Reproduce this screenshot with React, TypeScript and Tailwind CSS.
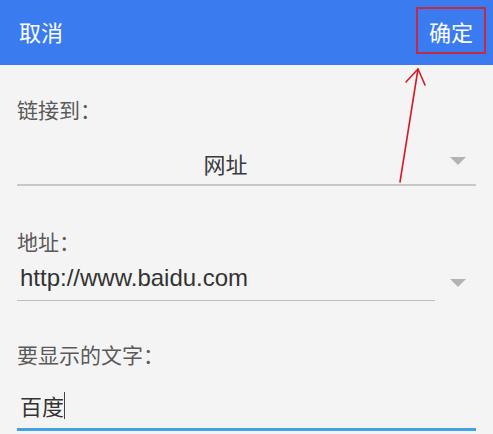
import React from "react";

const cjk = { fontFamily: '"Noto Sans CJK SC", "Noto Sans", sans-serif' };

function Triangle() {
  return (
    <svg width="16" height="8" viewBox="0 0 16 8" className="block">
      <path d="M0 0 L16 0 L8 8 Z" fill="#b3b3b3" />
    </svg>
  );
}

export default function App() {
  return (
    <div className="relative w-[493px] h-[434px] overflow-hidden bg-[#f4f4f4]" style={cjk}>
      <header className="h-[65px] bg-[#3a7cf0] flex items-center justify-between pl-[19px] pr-[20px] pb-[4px] text-white text-[22px] leading-[22px]">
        <span>取消</span>
        <span>确定</span>
      </header>

      <main className="px-[17px]">
        <div className="mt-[34px] h-[21px] text-[21px] leading-[21px] text-[#5a5a5a]">链接到：</div>
        <div className="mt-[20px] h-[46px] flex items-center border-b-2 border-[#c8c8c8]">
          <div className="flex-1 text-center text-[22px] leading-[22px] text-[#3a3a3a] pt-[2px]">网址</div>
          <div className="w-[42px] flex justify-center pl-[5px] pb-[3px]">
            <Triangle />
          </div>
        </div>

        <div className="mt-[45px] h-[21px] text-[21px] leading-[21px] text-[#5a5a5a]">地址：</div>
        <div className="mt-[12px] flex items-start">
          <div className="flex-1 border-b-[1.5px] border-[#bdbdbd] pb-[8px] pl-[3px]">
            <div
              className="h-[28px] text-[24px] leading-[28px] text-[#333333]"
              style={{ fontFamily: '"Liberation Sans", Arial, sans-serif' }}
            >
              http://www.baidu.com
            </div>
          </div>
          <div className="w-[41px] flex justify-center pl-[4px] pt-[15px]">
            <Triangle />
          </div>
        </div>

        <div className="mt-[43px] h-[21px] text-[21px] leading-[21px] text-[#5a5a5a]">要显示的文字：</div>
        <div className="mt-[26px] border-b-[3px] border-[#42a2e2] pb-[9px] pl-[3px]">
          <div className="h-[28px] flex items-center text-[22px] leading-[22px] text-[#333333]">
            <span>百度</span>
            <span className="w-px h-[27px] bg-[#444444]" />
          </div>
        </div>
      </main>

      <div className="absolute left-[416px] top-[7px] w-[70px] h-[47px] border-2 border-[#c42a46] pointer-events-none" />
      <svg
        className="absolute left-0 top-0 pointer-events-none"
        width="493"
        height="434"
        viewBox="0 0 493 434"
      >
        <g stroke="#d51a26" strokeWidth="1.6" fill="none" strokeLinecap="round" strokeLinejoin="round">
          <path d="M400 182 L418 69" />
          <path d="M406 82 L418 69 L425 85" />
        </g>
      </svg>
    </div>
  );
}
